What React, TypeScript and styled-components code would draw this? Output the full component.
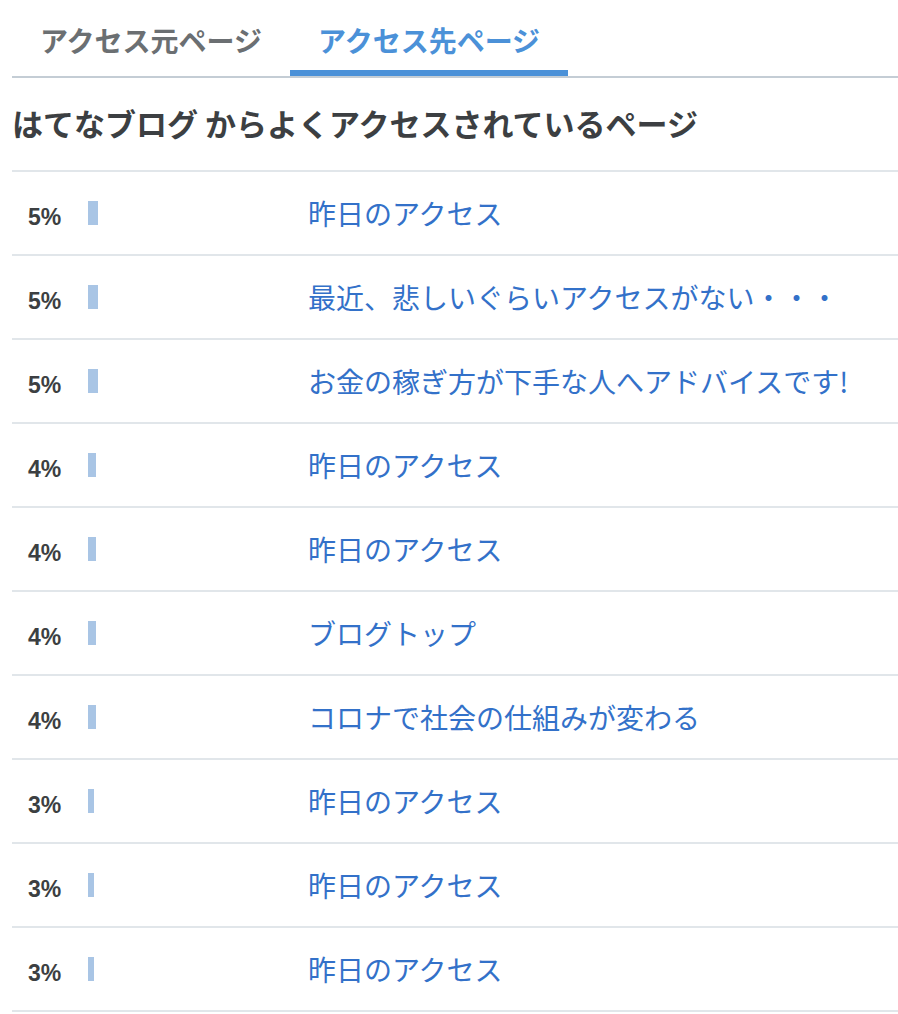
import React, { useState } from "react";
import styled, { createGlobalStyle } from "styled-components";

const GlobalStyle = createGlobalStyle`
  html, body {
    margin: 0;
    padding: 0;
    background: #ffffff;
  }
  body {
    font-family: "Noto Sans CJK JP", "Noto Sans", sans-serif;
    -webkit-font-smoothing: antialiased;
  }
`;

const Wrapper = styled.div`
  margin-left: 12px;
  width: 886px;
`;

const TabBar = styled.div`
  display: flex;
  border-bottom: 2px solid #c4cdd5;
`;

const Tab = styled.button<{ $active: boolean }>`
  appearance: none;
  background: none;
  border: none;
  border-bottom: 6px solid ${(p) => (p.$active ? "#4b91d8" : "transparent")};
  box-sizing: border-box;
  height: 76px;
  padding: 23px 28px 0;
  margin: 0;
  font-family: "Noto Sans CJK JP", sans-serif;
  font-size: 28px;
  font-weight: 700;
  line-height: 34px;
  color: ${(p) => (p.$active ? "#4b91d8" : "#6b6f72")};
  cursor: pointer;
  display: flex;
  align-items: flex-start;
`;

const Title = styled.h2`
  margin: 25px 0 27px;
  font-family: "Noto Sans CJK JP", sans-serif;
  font-size: 31px;
  line-height: 40px;
  font-weight: 700;
  color: #3c3f42;
`;

const List = styled.ul`
  list-style: none;
  margin: 0;
  padding: 0;
  border-top: 2px solid #e1e6ea;
`;

const Row = styled.li`
  display: flex;
  align-items: center;
  height: 84px;
  box-sizing: border-box;
  border-bottom: 2px solid #e1e6ea;
`;

const Percent = styled.span`
  width: 60px;
  padding-left: 16px;
  padding-top: 8px;
  box-sizing: content-box;
  font-family: "Liberation Sans", Arial, sans-serif;
  font-weight: 700;
  font-size: 23px;
  color: #3c3f42;
`;

const BarTrack = styled.div`
  width: 200px;
  height: 24px;
  margin-right: 20px;
  display: flex;
`;

const Bar = styled.div`
  height: 100%;
  background: #a9c5e5;
`;

const PageLink = styled.a`
  font-family: "Noto Sans CJK JP", sans-serif;
  font-size: 28px;
  color: #3371c9;
  text-decoration: none;
  line-height: 36px;
`;

const rows = [
  { pct: 5, title: "昨日のアクセス" },
  { pct: 5, title: "最近、悲しいぐらいアクセスがない・・・" },
  { pct: 5, title: "お金の稼ぎ方が下手な人へアドバイスです!" },
  { pct: 4, title: "昨日のアクセス" },
  { pct: 4, title: "昨日のアクセス" },
  { pct: 4, title: "ブログトップ" },
  { pct: 4, title: "コロナで社会の仕組みが変わる" },
  { pct: 3, title: "昨日のアクセス" },
  { pct: 3, title: "昨日のアクセス" },
  { pct: 3, title: "昨日のアクセス" },
];

export default function App() {
  const [active, setActive] = useState(1);
  return (
    <>
      <GlobalStyle />
      <Wrapper>
        <TabBar>
          <Tab $active={active === 0} onClick={() => setActive(0)}>
            アクセス元ページ
          </Tab>
          <Tab $active={active === 1} onClick={() => setActive(1)}>
            アクセス先ページ
          </Tab>
        </TabBar>
        <Title>はてなブログ からよくアクセスされているページ</Title>
        <List>
          {rows.map((r, i) => (
            <Row key={i}>
              <Percent>{r.pct}%</Percent>
              <BarTrack>
                <Bar style={{ width: `${r.pct * 2}px` }} />
              </BarTrack>
              <PageLink href="#">{r.title}</PageLink>
            </Row>
          ))}
        </List>
      </Wrapper>
    </>
  );
}
